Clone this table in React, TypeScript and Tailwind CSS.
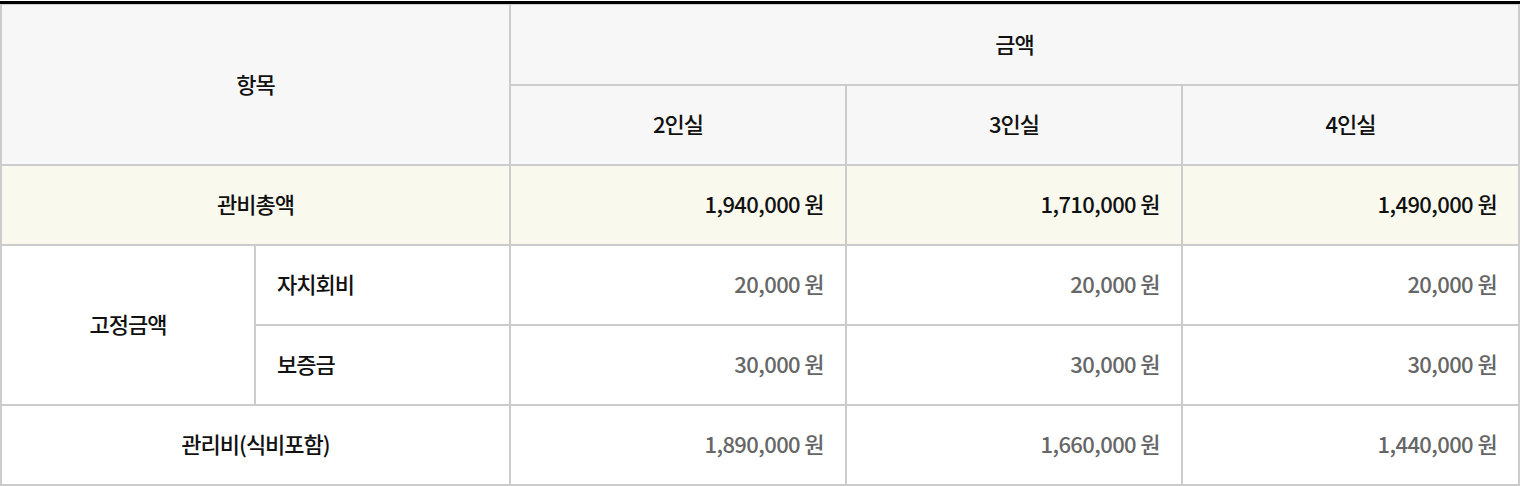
import React from "react";

const font = { fontFamily: '"Noto Sans CJK KR", "Noto Sans", sans-serif' };

const rows = [
  { a: "20,000 원", b: "20,000 원", c: "20,000 원" },
  { a: "30,000 원", b: "30,000 원", c: "30,000 원" },
];

export default function App() {
  const th = "border-r-2 border-b-2 border-t border-[#cccccc] bg-[#f7f7f7] text-[22px] tracking-[-1px] font-medium text-[#111] text-center align-middle leading-none pb-[4px]";
  const td = "border-r-2 border-b-2 border-[#cccccc] text-[22px] align-middle h-[80px] leading-none pb-[4px]";
  const lbl = td + " tracking-[-1px] font-medium text-[#111]";
  const num = td + " text-right pr-[21px] text-[#666] font-medium tracking-[-0.6px]";
  const hl = td + " text-right pr-[21px] font-medium text-[#111] tracking-[-0.6px]";
  return (
    <div className="pt-[1px] bg-white" style={font}>
      <table className="table-fixed border-separate border-spacing-0 w-[1520px] border-t-[3px] border-black">
        <colgroup>
          <col className="w-[256px]" />
          <col className="w-[255px]" />
          <col className="w-[336px]" />
          <col className="w-[336px]" />
          <col className="w-[337px]" />
        </colgroup>
        <thead>
          <tr>
            <th colSpan={2} rowSpan={2} className={th + " border-l-2"}>항목</th>
            <th colSpan={3} className={th + " h-[82px]"}>금액</th>
          </tr>
          <tr>
            <th className={th.replace(" border-t", "") + " h-[80px]"}>2인실</th>
            <th className={th.replace(" border-t", "") + " h-[80px]"}>3인실</th>
            <th className={th.replace(" border-t", "") + " h-[80px]"}>4인실</th>
          </tr>
        </thead>
        <tbody>
          <tr className="bg-[#f9f9ed]">
            <td colSpan={2} className={lbl + " border-l-2 text-center"}>관비총액</td>
            <td className={hl}>1,940,000 원</td>
            <td className={hl}>1,710,000 원</td>
            <td className={hl}>1,490,000 원</td>
          </tr>
          <tr>
            <td rowSpan={2} className={lbl + " border-l-2 text-center"}>고정금액</td>
            <td className={lbl + " pl-[21px]"}>자치회비</td>
            <td className={num}>{rows[0].a}</td>
            <td className={num}>{rows[0].b}</td>
            <td className={num}>{rows[0].c}</td>
          </tr>
          <tr>
            <td className={lbl + " pl-[21px]"}>보증금</td>
            <td className={num}>{rows[1].a}</td>
            <td className={num}>{rows[1].b}</td>
            <td className={num}>{rows[1].c}</td>
          </tr>
          <tr>
            <td colSpan={2} className={lbl + " border-l-2 text-center"}>관리비(식비포함)</td>
            <td className={num}>1,890,000 원</td>
            <td className={num}>1,660,000 원</td>
            <td className={num}>1,440,000 원</td>
          </tr>
        </tbody>
      </table>
    </div>
  );
}
